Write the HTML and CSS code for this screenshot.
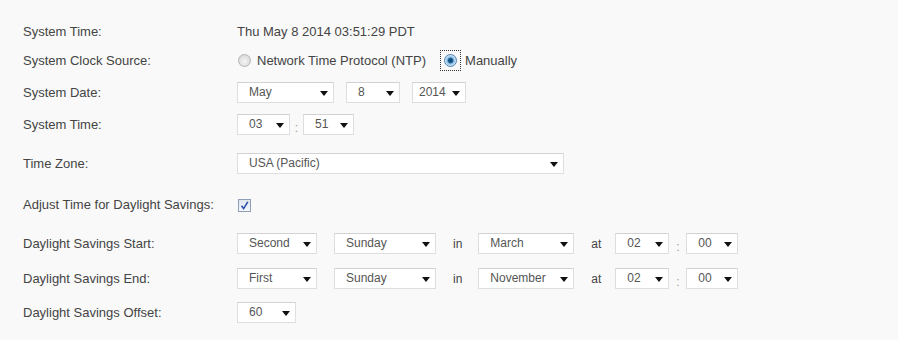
FILE: index.html
```html
<!DOCTYPE html>
<html>
<head>
<meta charset="utf-8">
<link rel="stylesheet" href="styles.css">
</head>
<body>
<div class="page">
  <div class="row r1">
    <div class="label">System Time:</div>
    <div class="value">Thu May 8 2014 03:51:29 PDT</div>
  </div>
  <div class="row r2">
    <div class="label">System Clock Source:</div>
    <div class="value radios">
      <span class="radio off"></span><span class="rlabel">Network Time Protocol (NTP)</span>
      <span class="focus"><span class="radio on"></span></span><span class="rlabel manual">Manually</span>
    </div>
  </div>
  <div class="row r3">
    <div class="label">System Date:</div>
    <div class="value">
      <div class="sel w97">May<i class="arr"></i></div>
      <div class="sel w54 ml12">8<i class="arr"></i></div>
      <div class="sel w54 ml12 tight">2014<i class="arr"></i></div>
    </div>
  </div>
  <div class="row r4">
    <div class="label">System Time:</div>
    <div class="value">
      <div class="sel w53">03<i class="arr"></i></div>
      <span class="colon">:</span>
      <div class="sel w51">51<i class="arr"></i></div>
    </div>
  </div>
  <div class="row r5">
    <div class="label">Time Zone:</div>
    <div class="value">
      <div class="sel w327">USA (Pacific)<i class="arr"></i></div>
    </div>
  </div>
  <div class="row r6">
    <div class="label">Adjust Time for Daylight Savings:</div>
    <div class="value">
      <span class="check"><svg width="13" height="13" viewBox="0 0 13 13"><path d="M3.5 6.8 L5.6 9.6 L9.8 2.8" fill="none" stroke="#2f4fae" stroke-width="1.6"/></svg></span>
    </div>
  </div>
  <div class="row r7">
    <div class="label">Daylight Savings Start:</div>
    <div class="value">
      <div class="sel w80">Second<i class="arr"></i></div>
      <div class="sel w102 ml17">Sunday<i class="arr"></i></div>
      <span class="word in">in</span>
      <div class="sel w96">March<i class="arr"></i></div>
      <span class="word at">at</span>
      <div class="sel w54">02<i class="arr"></i></div>
      <span class="colon c2">:</span>
      <div class="sel w52">00<i class="arr"></i></div>
    </div>
  </div>
  <div class="row r8">
    <div class="label">Daylight Savings End:</div>
    <div class="value">
      <div class="sel w80">First<i class="arr"></i></div>
      <div class="sel w102 ml17">Sunday<i class="arr"></i></div>
      <span class="word in">in</span>
      <div class="sel w96">November<i class="arr"></i></div>
      <span class="word at">at</span>
      <div class="sel w54">02<i class="arr"></i></div>
      <span class="colon c2">:</span>
      <div class="sel w52">00<i class="arr"></i></div>
    </div>
  </div>
  <div class="row r9">
    <div class="label">Daylight Savings Offset:</div>
    <div class="value">
      <div class="sel w59">60<i class="arr"></i></div>
    </div>
  </div>
</div>
</body>
</html>
```
FILE: styles.css
```css
html, body {
  margin: 0;
  padding: 0;
  background: #f9f9f9;
}
body {
  font-family: Arial, "Liberation Sans", sans-serif;
  color: #444;
  width: 898px;
  height: 340px;
  overflow: hidden;
}
.page {
  padding: 0 0 0 23px;
}
.row {
  display: flex;
  align-items: center;
  height: 21px;
}
.r1 { margin-top: 21px; }
.r2 { margin-top: 8px; }
.r3 { margin-top: 11px; }
.r4 { margin-top: 11px; }
.r5 { margin-top: 18px; }
.r6 { margin-top: 20px; }
.r7 { margin-top: 18px; }
.r8 { margin-top: 14px; }
.r9 { margin-top: 13px; }
.label {
  width: 214px;
  font-size: 13px;
  flex: none;
}
.value {
  display: flex;
  align-items: center;
  font-size: 13px;
}
.sel {
  position: relative;
  box-sizing: border-box;
  height: 21px;
  background: #fff;
  border: 1px solid #dedede;
  border-top-color: #d2d2d2;
  font-size: 12px;
  color: #555;
  line-height: 19px;
  padding-left: 11px;
  flex: none;
}
.sel.tight { padding-left: 6px; }
.arr {
  position: absolute;
  right: 5px;
  top: 8px;
  width: 0;
  height: 0;
  border-left: 4px solid transparent;
  border-right: 4px solid transparent;
  border-top: 5px solid #111;
}
.w51 { width: 51px; }
.w52 { width: 52px; }
.w53 { width: 53px; }
.w54 { width: 54px; }
.w59 { width: 59px; }
.w80 { width: 80px; }
.w96 { width: 96px; }
.w97 { width: 97px; }
.w102 { width: 102px; }
.w327 { width: 327px; }
.ml12 { margin-left: 12px; }
.ml17 { margin-left: 17px; }
.colon {
  width: 13px;
  text-align: center;
  font-size: 12px;
  color: #999;
  position: relative;
  top: 3px;
}
.colon.c2 { width: 17px; }
.word {
  font-size: 12px;
  color: #444;
}
.word.in { margin: 0 16px 0 17px; }
.word.at { margin: 0 14px 0 17px; }
.radios { font-size: 13px; }
.radio {
  display: inline-block;
  box-sizing: border-box;
  width: 13px;
  height: 13px;
  border-radius: 50%;
  flex: none;
}
.radio.off {
  border: 1px solid #b3b3b3;
  background: radial-gradient(circle at 50% 60%, #f4f4f4 0, #dcdcdc 70%);
  margin-left: 1px;
}
.radio.on {
  border: 1px solid #4f7fa6;
  background: radial-gradient(circle, #0c3f66 0, #1b5e91 2.2px, #8fc0e6 3.4px, #dfefff 6px);
}
.rlabel { margin-left: 6px; }
.rlabel.manual { margin-left: 4px; }
.focus {
  display: inline-flex;
  align-items: center;
  justify-content: center;
  box-sizing: border-box;
  width: 21px;
  height: 21px;
  border: 1px dotted #333;
  margin-left: 14px;
}
.check {
  display: inline-block;
  box-sizing: border-box;
  width: 13px;
  height: 13px;
  border: 1px solid #8f9fb8;
  background: linear-gradient(#dfe6f0, #f4f7fb);
  margin-left: 1px;
  position: relative;
  top: 1px;
}
.check svg {
  position: absolute;
  left: -1px;
  top: -1px;
}
```
